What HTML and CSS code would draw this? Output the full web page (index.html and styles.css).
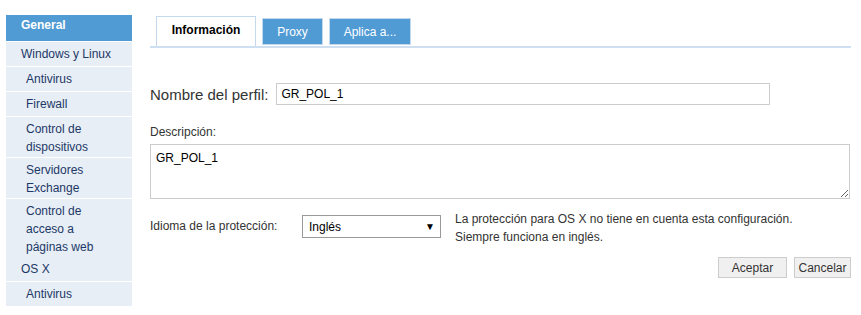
FILE: index.html
```html
<!DOCTYPE html>
<html lang="es">
<head>
    <meta charset="UTF-8">
    <title>Perfil</title>
    <link rel="stylesheet" href="styles.css">
</head>
<body>

    <div class="sidebar">
        <div class="side-title">General</div>
        <div class="side-group">Windows y Linux</div>
        <div class="side-item">Antivirus</div>
        <div class="side-item">Firewall</div>
        <div class="side-item multi">Control de<br>dispositivos</div>
        <div class="side-item multi">Servidores<br>Exchange</div>
        <div class="side-item multi">Control de<br>acceso a<br>páginas web</div>
        <div class="side-group">OS X</div>
        <div class="side-item">Antivirus</div>
    </div>

    <div class="main">
        <div class="tabs">
            <div class="tab active">Información</div>
            <div class="tab proxy">Proxy</div>
            <div class="tab apply">Aplica a...</div>
        </div>

        <div class="name-row">
            <label for="name">Nombre del perfil:</label>
            <input type="text" id="name" value="GR_POL_1">
        </div>

        <div class="desc-label">Descripción:</div>
        <textarea class="desc">GR_POL_1</textarea>

        <div class="lang-row">
            <span class="lang-label">Idioma de la protección:</span>
            <div class="select">
                <span>Inglés</span>
                <span class="arrow">&#9660;</span>
            </div>
            <div class="note">La protección para OS X no tiene en cuenta esta configuración.<br>Siempre funciona en inglés.</div>
        </div>

        <div class="actions">
            <button class="btn accept">Aceptar</button>
            <button class="btn cancel">Cancelar</button>
        </div>
    </div>

</body>
</html>
```

FILE: styles.css
```css
body {
    font-family: "Liberation Sans", Arial, sans-serif;
    font-size: 12px;
    background-color: #fff;
    margin: 0;
    padding: 15px 10px 0 6px;
    display: flex;
    align-items: flex-start;
    color: #333;
}
.sidebar {
    width: 126px;
    flex-shrink: 0;
    background-color: #e8eef6;
    color: #1c3866;
}
.side-title {
    background-color: #519bd5;
    color: #fff;
    font-weight: bold;
    height: 26px;
    line-height: 21px;
    padding-left: 15px;
    border-bottom: 1px solid #fff;
}
.side-group {
    padding: 3px 0 3px 15px;
    line-height: 18px;
}
.side-item {
    padding: 3px 0 3px 20px;
    line-height: 18px;
    border-top: 1px solid #fff;
}
.side-item.multi {
    padding-bottom: 1px;
}
.main {
    flex: 1;
    margin-left: 18px;
}
.tabs {
    display: flex;
    align-items: flex-end;
    padding-left: 6px;
    border-bottom: 2px solid #cddff1;
    height: 30px;
    margin-top: 1px;
}
.tab {
    border: 1px solid #c5d9ee;
    border-bottom: none;
    text-align: center;
    margin-right: 6px;
}
.active {
    width: 98px;
    height: 29px;
    line-height: 27px;
    background-color: #fff;
    color: #000;
    font-weight: bold;
}
.proxy,
.apply {
    height: 25px;
    line-height: 26px;
    background-color: #519bd5;
    color: #fff;
    margin-bottom: 1px;
    border-bottom: 1px solid #c5d9ee;
}
.proxy {
    width: 59px;
}
.apply {
    width: 80px;
}
.name-row {
    display: flex;
    align-items: center;
    margin-top: 35px;
}
.name-row label {
    font-size: 15px;
    color: #333;
    margin-right: 8px;
}
.name-row input {
    width: 494px;
    height: 22px;
    box-sizing: border-box;
    border: 1px solid #ccc;
    font-family: "Liberation Sans", Arial, sans-serif;
    font-size: 12px;
    color: #000;
    padding: 2px 4px;
    outline: none;
}
.desc-label {
    margin-top: 20px;
    line-height: 14px;
}
.desc {
    display: block;
    width: 700px;
    height: 55px;
    box-sizing: border-box;
    margin-top: 5px;
    border: 1px solid #ccc;
    font-family: "Liberation Sans", Arial, sans-serif;
    font-size: 12px;
    color: #000;
    padding: 6px 5px;
    resize: vertical;
}
.lang-row {
    display: flex;
    align-items: flex-start;
    margin-top: 16px;
}
.lang-label {
    width: 152px;
    margin-top: 4px;
}
.select {
    width: 139px;
    height: 23px;
    box-sizing: border-box;
    border: 1px solid #999;
    display: flex;
    justify-content: space-between;
    align-items: center;
    padding: 0 5px 0 6px;
    color: #000;
}
.arrow {
    font-size: 10px;
}
.note {
    margin-left: 14px;
    line-height: 18px;
    margin-top: -5px;
}
.actions {
    display: flex;
    justify-content: flex-end;
    gap: 7px;
    margin-top: 11px;
}
.btn {
    height: 21px;
    background-color: #f0f0f0;
    border: 1px solid #ccc;
    font-family: "Liberation Sans", Arial, sans-serif;
    font-size: 12px;
    color: #333;
    padding: 0;
}
.accept {
    width: 69px;
}
.cancel {
    width: 57px;
}
```
